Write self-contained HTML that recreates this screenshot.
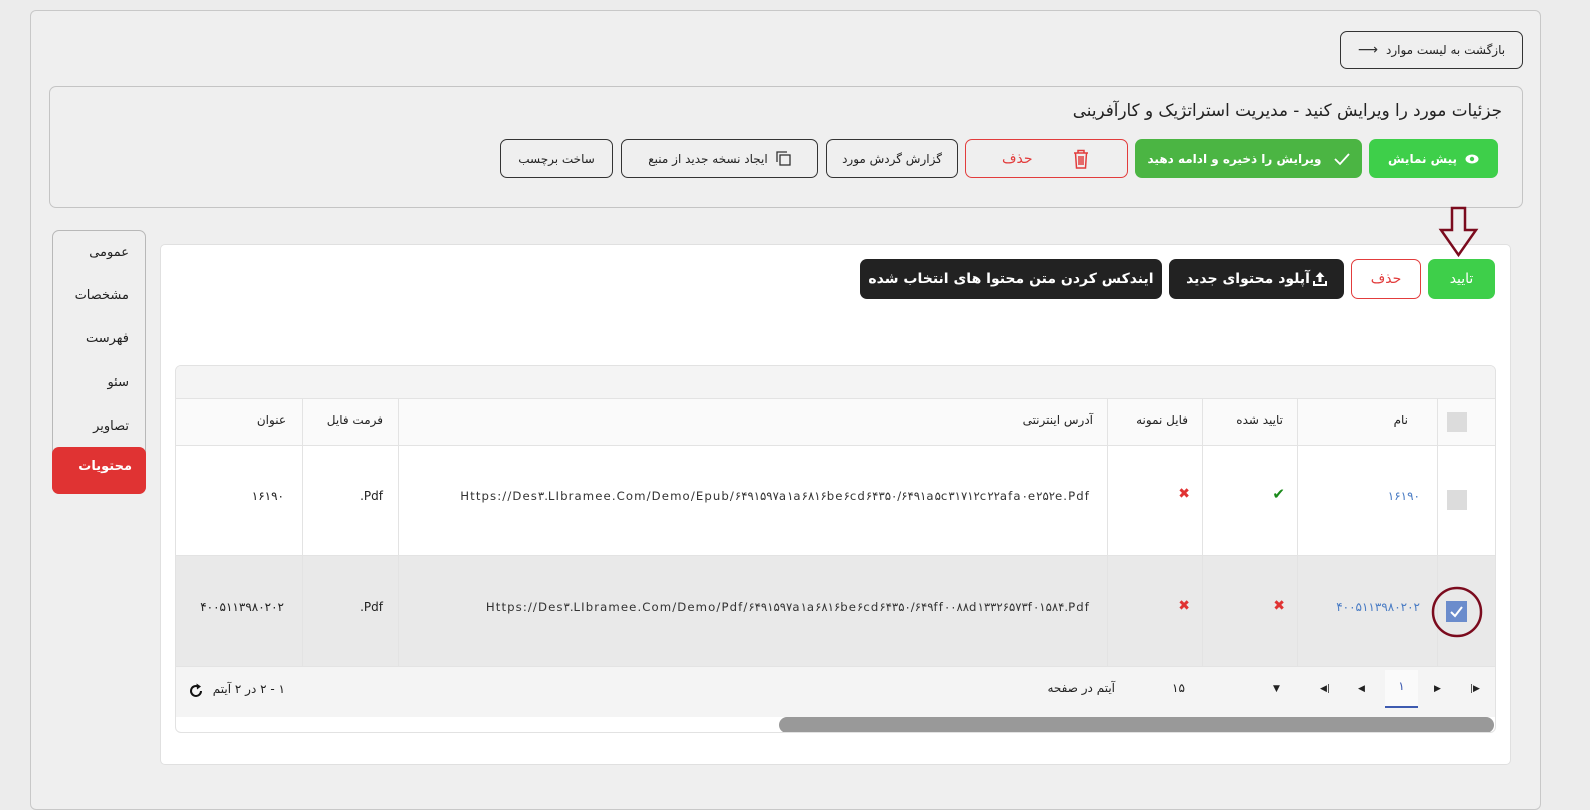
<!DOCTYPE html>
<html><head><meta charset="utf-8">
<style>
*{box-sizing:border-box;margin:0;padding:0}
body{width:1590px;height:794px;overflow:hidden;background:#ececec;font-family:"DejaVu Sans","Liberation Sans",sans-serif;color:#222;position:relative}
.a{position:absolute}
.btn{position:absolute;display:flex;align-items:center;justify-content:center;border-radius:7px;font-size:12px;direction:rtl;white-space:nowrap}
.ob{border:1px solid #333;background:transparent;color:#222}
.g1{background:#3ecf4a;color:#fff;font-weight:bold}
.g2{background:#4bb543;color:#fff;font-weight:bold}
.rb{border:1px solid #e23c3c;color:#e23c3c;background:transparent}
.bk{background:#222;color:#fff;font-weight:bold;font-size:14px}
.t{position:absolute;direction:rtl;white-space:nowrap;font-size:12px}
.u{position:absolute;direction:ltr;unicode-bidi:isolate;white-space:nowrap;font-size:11.7px;color:#333;letter-spacing:1.1px;right:500px}
.vl{position:absolute;width:1px;background:#e3e3e3}
.hl{position:absolute;height:1px;background:#e3e3e3}
.side div{position:absolute;right:16px;font-size:13px;direction:rtl}
</style></head><body>
<div class="a" style="left:30px;top:10px;width:1511px;height:800px;border:1px solid #c8c8c8;border-radius:6px;background:#efefef"></div>

<div class="btn ob" style="left:1340px;top:31px;width:183px;height:38px;font-size:12px">بازگشت به لیست موارد <span style="margin-right:8px;font-size:14px;color:#333">⟶</span></div>

<div class="a" style="left:49px;top:86px;width:1474px;height:122px;border:1px solid #c4c4c4;border-radius:7px"></div>
<div class="t" style="right:88px;top:100px;font-size:16.8px">جزئیات مورد را ویرایش کنید - مدیریت استراتژیک و کارآفرینی</div>

<div class="btn g1" style="left:1369px;top:139px;width:129px;height:39px">
<svg width="14" height="10" viewBox="0 0 14 10" style="margin-left:8px"><ellipse cx="7" cy="5" rx="6.5" ry="4.5" fill="#fff"/><circle cx="7" cy="5" r="2.2" fill="#3ecf4a"/></svg>پیش نمایش</div>
<div class="btn g2" style="left:1135px;top:139px;width:227px;height:39px">
<svg width="16" height="14" viewBox="0 0 16 14" style="margin-left:12px"><path d="M1 7 L6 12 L15 2" fill="none" stroke="#fff" stroke-width="1.8"/></svg>ویرایش را ذخیره و ادامه دهید</div>
<div class="btn rb" style="left:965px;top:139px;width:163px;height:39px;font-size:14px;justify-content:space-between;padding:0 38px 0 36px">
<svg width="16" height="20" viewBox="0 0 16 20"><path d="M1 4h14M5 4V1.5h6V4M2.5 4l1 15h9l1-15M6 7v9M8 7v9M10 7v9" fill="none" stroke="#e23c3c" stroke-width="1.5"/></svg><span>حذف</span></div>
<div class="btn ob" style="left:826px;top:139px;width:132px;height:39px">گزارش گردش مورد</div>
<div class="btn ob" style="left:621px;top:139px;width:197px;height:39px">
<svg width="15" height="15" viewBox="0 0 15 15" style="margin-left:8px"><rect x="4" y="4" width="10" height="10" fill="none" stroke="#333" stroke-width="1.3"/><path d="M1 11V1h10" fill="none" stroke="#333" stroke-width="1.3"/></svg>ایجاد نسخه جدید از منبع</div>
<div class="btn ob" style="left:500px;top:139px;width:113px;height:39px">ساخت برچسب</div>

<div class="a side" style="left:52px;top:230px;width:94px;height:264px;border:1px solid #b8b8b8;border-radius:7px">
<div style="top:14px">عمومی</div>
<div style="top:57px">مشخصات</div>
<div style="top:100px">فهرست</div>
<div style="top:144px">سئو</div>
<div style="top:188px">تصاویر</div>
</div>
<div class="a" style="left:52px;top:447px;width:94px;height:47px;background:#e03333;border-radius:7px;color:#fff;font-weight:bold;font-size:13px;direction:rtl;padding:12px 14px 0 0">محتویات</div>

<div class="a" style="left:160px;top:244px;width:1351px;height:521px;background:#fff;border-radius:5px;border:1px solid #e0e0e0"></div>

<svg class="a" style="left:1438px;top:206px" width="42" height="52" viewBox="0 0 42 52"><path d="M14 2h13v22h11L20.5 49 3 24h11z" fill="none" stroke="#7b0b1e" stroke-width="2.5" stroke-linejoin="miter"/></svg>

<div class="btn g1" style="left:1428px;top:259px;width:67px;height:40px;font-size:14px;font-weight:normal">تایید</div>
<div class="btn rb" style="left:1351px;top:259px;width:70px;height:40px;font-size:14px">حذف</div>
<div class="btn bk" style="left:1169px;top:259px;width:175px;height:40px">
<svg width="14" height="14" viewBox="0 0 14 14" style="margin-left:3px"><path d="M7 0L2.5 5h3v5h3V5h3z M0 9v5h14V9h-2v3H2V9z" fill="#fff"/></svg>آپلود محتوای جدید</div>
<div class="btn bk" style="left:860px;top:259px;width:302px;height:40px">ایندکس کردن متن محتوا های انتخاب شده</div>

<!-- table -->
<div class="a" style="left:175px;top:365px;width:1321px;height:368px;border:1px solid #e2e2e2;border-radius:6px;overflow:hidden;background:#fff">
<div class="a" style="left:0;top:0;width:1321px;height:33px;background:#f4f4f4"></div>
<div class="a" style="left:0;top:33px;width:1321px;height:47px;background:#fafafa"></div>
<div class="a" style="left:0;top:190px;width:1321px;height:111px;background:#e9e9e9"></div>
<div class="a" style="left:0;top:301px;width:1321px;height:50px;background:#f4f4f4"></div>
<div class="a" style="left:603px;top:351px;width:715px;height:16px;background:#999;border-radius:8px"></div>
</div>
<div class="hl" style="left:175px;top:398px;width:1320px"></div>
<div class="hl" style="left:175px;top:445px;width:1320px"></div>
<div class="hl" style="left:175px;top:555px;width:1320px"></div>
<div class="hl" style="left:175px;top:666px;width:1320px"></div>
<div class="vl" style="left:1437px;top:398px;height:268px"></div>
<div class="vl" style="left:1297px;top:398px;height:268px"></div>
<div class="vl" style="left:1202px;top:398px;height:268px"></div>
<div class="vl" style="left:1107px;top:398px;height:268px"></div>
<div class="vl" style="left:398px;top:398px;height:268px"></div>
<div class="vl" style="left:302px;top:398px;height:268px"></div>

<div class="a" style="left:1447px;top:412px;width:20px;height:20px;background:#dcdcdc"></div>
<div class="t" style="right:182px;top:413px">نام</div>
<div class="t" style="right:307px;top:413px">تایید شده</div>
<div class="t" style="right:402px;top:413px">فایل نمونه</div>
<div class="t" style="right:497px;top:413px">آدرس اینترنتی</div>
<div class="t" style="right:1207px;top:413px">فرمت فایل</div>
<div class="t" style="right:1304px;top:413px">عنوان</div>

<div class="a" style="left:1447px;top:490px;width:20px;height:20px;background:#dcdcdc"></div>
<div class="t" style="right:170px;top:489px;color:#4a7cc4">۱۶۱۹۰</div>
<div class="t" style="right:305px;top:485px;color:#1a8a1a;font-size:15px">✔</div>
<div class="t" style="right:400px;top:486px;color:#e03333;font-size:14px">✖</div>
<div class="u" style="top:489px">Https://Des۳.LIbramee.Com/Demo/Epub/۶۴۹۱۵۹۷a۱a۶۸۱۶be۶cd۶۴۳۵۰/۶۴۹۱a۵c۳۱۷۱۲c۲۲afa۰e۲۵۲e.Pdf</div>
<div class="t" style="right:1207px;top:489px">Pdf.</div>
<div class="t" style="right:1306px;top:489px">۱۶۱۹۰</div>

<div class="a" style="left:1446px;top:601px;width:21px;height:21px;background:#6b8ccc"><svg width="21" height="21" viewBox="0 0 21 21"><path d="M5 11l4 4 7-9" fill="none" stroke="#fff" stroke-width="2"/></svg></div>
<svg class="a" style="left:1430px;top:585px" width="54" height="54"><circle cx="27" cy="27" r="24" fill="none" stroke="#7b0b1e" stroke-width="2.5"/></svg>
<div class="t" style="right:170px;top:600px;color:#4a7cc4">۴۰۰۵۱۱۳۹۸۰۲۰۲</div>
<div class="t" style="right:305px;top:598px;color:#e03333;font-size:14px">✖</div>
<div class="t" style="right:400px;top:598px;color:#e03333;font-size:14px">✖</div>
<div class="u" style="top:600px">Https://Des۳.LIbramee.Com/Demo/Pdf/۶۴۹۱۵۹۷a۱a۶۸۱۶be۶cd۶۴۳۵۰/۶۴۹ff۰۰۸۸d۱۳۳۲۶۵۷۳f۰۱۵۸۴.Pdf</div>
<div class="t" style="right:1207px;top:600px">Pdf.</div>
<div class="t" style="right:1306px;top:600px">۴۰۰۵۱۱۳۹۸۰۲۰۲</div>

<div class="a" style="left:1385px;top:670px;width:33px;height:38px;background:#fafafa;border-bottom:2px solid #3e5bb0;font-size:12px;text-align:center;padding-top:9px;color:#3e5bb0">۱</div>
<div class="t" style="left:1470px;top:684px;font-size:9px">▶|</div>
<div class="t" style="left:1434px;top:684px;font-size:9px">▶</div>
<div class="t" style="left:1358px;top:684px;font-size:9px">◀</div>
<div class="t" style="left:1320px;top:684px;font-size:9px">|◀</div>
<div class="t" style="left:1273px;top:684px;font-size:9px">▼</div>
<div class="t" style="left:1172px;top:681px">۱۵</div>
<div class="t" style="right:475px;top:681px">آیتم در صفحه</div>
<div class="t" style="right:1305px;top:682px">۱ - ۲ در ۲ آیتم</div>
<svg class="a" style="left:188px;top:683px" width="16" height="16" viewBox="0 0 16 16"><path d="M13 8A5 5 0 1 1 10 3.4" fill="none" stroke="#111" stroke-width="2"/><path d="M8.5 0.5L13 3.5 9 6.5z" fill="#111"/></svg>
</body></html>
